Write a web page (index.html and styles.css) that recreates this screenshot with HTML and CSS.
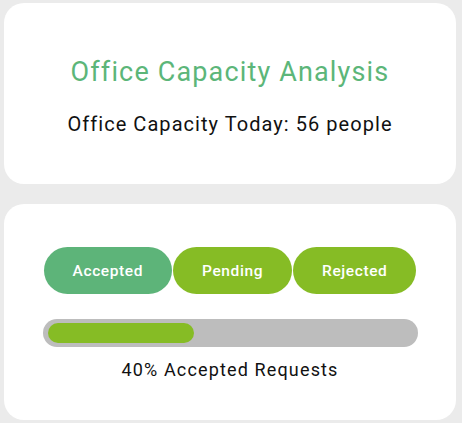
FILE: index.html
```html
<!DOCTYPE html>
<html>
<head>
<meta charset="utf-8">
<link rel="stylesheet" href="styles.css">
</head>
<body>
<div class="page">
  <section class="card card-summary">
    <h1 class="title">Office Capacity Analysis</h1>
    <p class="subtitle">Office Capacity Today: 56 people</p>
  </section>
  <section class="card card-requests">
    <div class="tabs">
      <button class="tab tab-active">Accepted</button>
      <button class="tab">Pending</button>
      <button class="tab">Rejected</button>
    </div>
    <div class="track"><div class="fill" style="width:40%"></div></div>
    <p class="caption">40% Accepted Requests</p>
  </section>
</div>
</body>
</html>
```
FILE: styles.css
```css
html, body {
  margin: 0;
  padding: 0;
  background: #ebebeb;
}
body {
  font-family: Roboto, "Noto Sans", sans-serif;
  color: #1a1a1a;
}
.page {
  padding: 3px 6px 3px 4px;
  display: flex;
  flex-direction: column;
  gap: 20px;
}
.card {
  background: #ffffff;
  border-radius: 20px;
  display: flex;
  flex-direction: column;
  align-items: center;
}
.card-summary {
  height: 181px;
  box-sizing: border-box;
  padding-top: 53px;
}
.title {
  margin: 0;
  font-size: 27px;
  line-height: 32px;
  font-weight: 400;
  letter-spacing: 1.15px;
  color: #5cb679;
}
.subtitle {
  margin: 25px 0 0;
  font-size: 20px;
  line-height: 23px;
  letter-spacing: 1.05px;
  color: #111;
}
.card-requests {
  height: 216px;
  box-sizing: border-box;
  padding-top: 43px;
}
.tabs {
  display: flex;
  gap: 1px;
}
.tab {
  height: 47px;
  padding: 0 29px;
  border: none;
  border-radius: 24px;
  background: #86bc25;
  color: #fff;
  font-family: Roboto, "Noto Sans", sans-serif;
  font-size: 15.5px;
  font-weight: 500;
  letter-spacing: 0.6px;
}
.tab-active {
  background: #5db479;
}
.track {
  margin-top: 25px;
  width: 375px;
  height: 28px;
  box-sizing: border-box;
  padding: 4px 5px;
  border-radius: 14px;
  background: #bdbdbd;
}
.fill {
  height: 20px;
  border-radius: 10px;
  background: #86bc25;
}
.caption {
  margin: 12px 0 0;
  font-size: 18px;
  line-height: 21px;
  letter-spacing: 1.15px;
  color: #111;
}
```
